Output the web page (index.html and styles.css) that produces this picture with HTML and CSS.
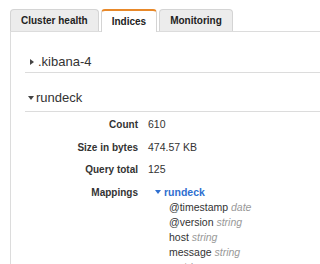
FILE: index.html
```html
<!DOCTYPE html>
<html lang="en">
<head>
    <meta charset="UTF-8">
    <meta name="viewport" content="width=device-width, initial-scale=1.0">
    <title>Indices</title>
    <link rel="stylesheet" href="styles.css">
</head>
<body>
    <div class="tabs">
        <div class="tab">Cluster health</div>
        <div class="tab active">Indices</div>
        <div class="tab">Monitoring</div>
    </div>
    <div class="panel">
        <div class="section">
            <div class="section-header"><span class="caret closed"></span>.kibana-4</div>
        </div>
        <div class="section">
            <div class="section-header open"><span class="caret open"></span>rundeck</div>
            <div class="details">
                <div class="row"><div class="label">Count</div><div class="value">610</div></div>
                <div class="row"><div class="label">Size in bytes</div><div class="value">474.57 KB</div></div>
                <div class="row"><div class="label">Query total</div><div class="value">125</div></div>
                <div class="row">
                    <div class="label">Mappings</div>
                    <div class="value">
                        <div class="mapping-name"><span class="caret open blue"></span>rundeck</div>
                        <div class="field">@timestamp <span class="type">date</span></div>
                        <div class="field">@version <span class="type">string</span></div>
                        <div class="field">host <span class="type">string</span></div>
                        <div class="field">message <span class="type">string</span></div>
                        <div class="field">port <span class="type">long</span></div>
                    </div>
                </div>
            </div>
        </div>
    </div>
</body>
</html>
```
FILE: styles.css
```css
body {
    font-family: "Liberation Sans", Arial, sans-serif;
    color: #333;
    background: #fff;
    margin: 0;
    height: 264px;
    overflow: hidden;
}

.tabs {
    display: flex;
    gap: 2px;
    padding: 9px 0 0 10px;
}

.tab {
    height: 21px;
    line-height: 21px;
    padding: 0 10px;
    font-size: 10px;
    font-weight: bold;
    color: #222;
    background: #ececec;
    border: 1px solid #d4d4d4;
    border-bottom: none;
    border-radius: 4px 4px 0 0;
    margin-bottom: -1px;
}

.tab.active {
    background: #fff;
    border-top: 2px solid #e8892a;
    line-height: 22px;
    position: relative;
    z-index: 1;
}

.panel {
    border-top: 1px solid #dcdcdc;
    border-left: 1px solid #dcdcdc;
    margin-left: 10px;
    padding-left: 14px;
    height: 300px;
}

.section-header {
    font-size: 13px;
    line-height: 18px;
    padding: 21px 0 1px 4px;
    border-bottom: 1px solid #dcdcdc;
    display: flex;
    align-items: center;
}

.section-header.open {
    padding: 16px 0 4px 4px;
}

.caret {
    display: inline-block;
    width: 0;
    height: 0;
    margin-right: 4px;
}

.caret.closed {
    border-top: 3.5px solid transparent;
    border-bottom: 3.5px solid transparent;
    border-left: 4px solid #444;
    margin-left: 1px;
}

.caret.open {
    border-left: 3.5px solid transparent;
    border-right: 3.5px solid transparent;
    border-top: 4px solid #444;
    margin-right: 2px;
    margin-left: -1px;
}

.caret.open.blue {
    border-top-color: #2f6fd0;
    margin-left: 0;
    margin-right: 3px;
}

.details {
    padding-top: 1.5px;
    font-size: 10.5px;
}

.row {
    display: flex;
    gap: 10px;
    line-height: 15px;
    padding: 3.75px 0;
}

.label {
    width: 113px;
    text-align: right;
    font-weight: bold;
    font-size: 10px;
}

.mapping-name {
    display: flex;
    align-items: center;
    height: 15px;
    color: #2f6fd0;
    font-weight: bold;
    margin-left: 7px;
}

.field {
    margin-left: 21px;
}

.type {
    color: #999;
    font-style: italic;
}
```
